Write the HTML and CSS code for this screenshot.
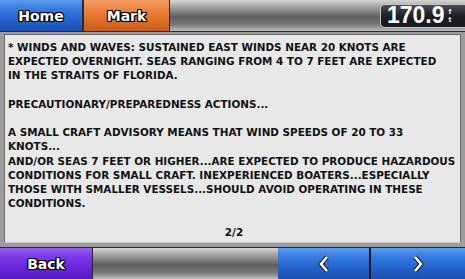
FILE: index.html
```html
<!DOCTYPE html>
<html>
<head>
<meta charset="utf-8">
<link rel="stylesheet" href="styles.css">
</head>
<body>
<div class="screen">
  <div class="topbar">
    <div class="btn btn-blue btn-home">Home</div>
    <div class="btn btn-orange btn-mark">Mark</div>
    <div class="filler">
      <div class="readout"><span class="val">170.9</span><span class="unit"><span>f</span><span>t</span></span></div>
    </div>
  </div>
  <div class="main">
    <div class="panel">
      <div class="text">* WINDS AND WAVES: SUSTAINED EAST WINDS NEAR 20 KNOTS ARE
EXPECTED OVERNIGHT. SEAS RANGING FROM 4 TO 7 FEET ARE EXPECTED
IN THE STRAITS OF FLORIDA.

PRECAUTIONARY/PREPAREDNESS ACTIONS...

A SMALL CRAFT ADVISORY MEANS THAT WIND SPEEDS OF 20 TO 33
KNOTS...
AND/OR SEAS 7 FEET OR HIGHER...ARE EXPECTED TO PRODUCE HAZARDOUS
CONDITIONS FOR SMALL CRAFT. INEXPERIENCED BOATERS...ESPECIALLY
THOSE WITH SMALLER VESSELS...SHOULD AVOID OPERATING IN THESE
CONDITIONS.</div>
      <div class="page">2/2</div>
    </div>
  </div>
  <div class="bottombar">
    <div class="btn btn-purple btn-back">Back</div>
    <div class="filler"></div>
    <div class="btn btn-blue btn-arrow">
      <svg width="14" height="18" viewBox="0 0 14 18"><path d="M10 2 L4 9 L10 16" fill="none" stroke="#1a1a1a" stroke-width="4.5"/><path d="M10 2 L4 9 L10 16" fill="none" stroke="#fff" stroke-width="2.5"/></svg>
    </div>
    <div class="sep"></div>
    <div class="btn btn-blue btn-arrow">
      <svg width="14" height="18" viewBox="0 0 14 18"><path d="M4 2 L10 9 L4 16" fill="none" stroke="#1a1a1a" stroke-width="4.5"/><path d="M4 2 L10 9 L4 16" fill="none" stroke="#fff" stroke-width="2.5"/></svg>
    </div>
  </div>
</div>
</body>
</html>
```
FILE: styles.css
```css
html, body { margin: 0; padding: 0; }
body { width: 465px; height: 279px; overflow: hidden; background: #9c9c9c; font-family: "DejaVu Sans", sans-serif; }
.screen { width: 465px; height: 279px; display: flex; flex-direction: column; }
.topbar { height: 32px; display: flex; border-bottom: 1px solid #2a2a2a; box-sizing: border-box; }
.bottombar { height: 32px; display: flex; border-top: 1px solid #2a2a2a; box-sizing: border-box; }
.btn { display: flex; align-items: center; justify-content: center; color: #fff; font-weight: bold; font-size: 14px;
  text-shadow: -1px -1px 0 #000, 1px -1px 0 #000, -1px 1px 0 #000, 1px 1px 0 #000, 0 1px 0 #000, 0 -1px 0 #000, 1px 0 0 #000, -1px 0 0 #000; box-sizing: border-box; }
.btn-blue { background: linear-gradient(#5d9df0 0%, #3a7fe0 25%, #2566d0 60%, #1c4fb0 100%); }
.btn-orange { background: linear-gradient(#f6a068 0%, #ee8744 25%, #e2722a 60%, #c45a1c 100%); }
.btn-purple { background: linear-gradient(#9a60f0 0%, #7c3ce8 25%, #6a28dc 60%, #5418c0 100%); }
.btn-home { width: 84px; border-right: 2px solid #2a2a2a; }
.btn-mark { width: 86px; border-right: 1px solid #2a2a2a; }
.btn-back { width: 93px; border-right: 1px solid #2a2a2a; }
.btn-arrow { width: 91px; }
.btn-arrow:last-child { flex: 1; }
.sep { width: 2px; background: #1a1a1a; }
.filler { flex: 1; background: linear-gradient(#d6d6d6 0%, #a8a8a8 20%, #5e5e5e 55%, #7a7a7a 80%, #bdbdbd 100%); display: flex; justify-content: flex-end; align-items: center; }
.bottombar .filler { flex: 0 0 185px; }
.readout { width: 85px; height: 24px; border: 1px solid #c8c8c8; border-right: none; border-radius: 5px 0 0 5px; background: linear-gradient(#4a4e54, #1c1f24 50%, #15181c); display: flex; align-items: center; padding-left: 6px; box-sizing: border-box; color: #fff; font-weight: bold; }
.val { font-family: "Liberation Sans", Arial, sans-serif; font-size: 23px; line-height: 1; }
.unit { display: flex; flex-direction: column; font-family: "Liberation Sans", Arial, sans-serif; font-size: 8px; line-height: 8px; margin-left: 4px; align-items: center; }
.main { flex: 1; padding: 2px 4px 4px 4px; display: flex; }
.panel { flex: 1; background: #e8e8e8; border: 1px solid #6a6a6a; border-bottom-color: #c8c8c8; display: flex; flex-direction: column; padding: 5px 0 0 3px; box-sizing: border-box; }
.text { white-space: pre; font-size: 10.4px; font-weight: bold; line-height: 14.2px; color: #111; font-family: "DejaVu Sans", sans-serif; flex: 1; }
.page { text-align: center; font-size: 10.4px; font-weight: bold; color: #111; padding-bottom: 4px; font-family: "DejaVu Sans", sans-serif; }
```
